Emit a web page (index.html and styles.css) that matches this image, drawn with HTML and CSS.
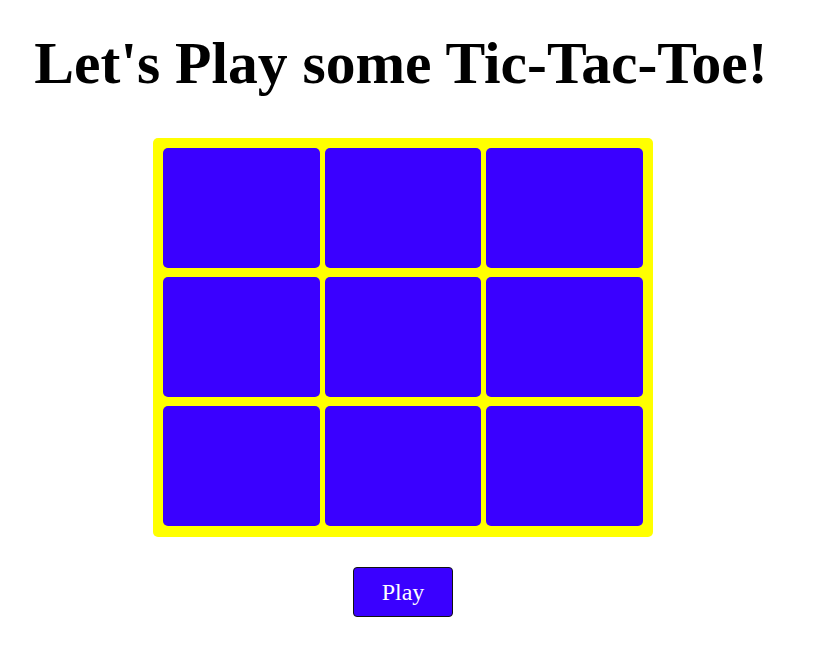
FILE: index.html
```html
<!DOCTYPE html>
<html lang="en">
<head>
<meta charset="utf-8">
<title>Tic-Tac-Toe</title>
<link rel="stylesheet" href="styles.css">
</head>
<body>
<main class="page">
  <h1 class="title">Let's Play some Tic-Tac-Toe!</h1>
  <div class="board">
    <div class="cell"></div>
    <div class="cell"></div>
    <div class="cell"></div>
    <div class="cell"></div>
    <div class="cell"></div>
    <div class="cell"></div>
    <div class="cell"></div>
    <div class="cell"></div>
    <div class="cell"></div>
  </div>
  <button class="play" type="button">Play</button>
</main>
</body>
</html>
```
FILE: styles.css
```css
html, body {
  margin: 0;
  padding: 0;
  background: #ffffff;
}
body {
  padding: 0 8px;
  font-family: "Liberation Serif", "Times New Roman", serif;
}
.page {
  width: 790px;
  display: flex;
  flex-direction: column;
  align-items: center;
  padding-top: 29px;
}
.title {
  margin: 0 4px 41px 0;
  font-size: 59.6px;
  line-height: 68px;
  font-weight: 700;
  color: #000;
  white-space: nowrap;
}
.board {
  box-sizing: border-box;
  width: 500px;
  padding: 10px 10px 11px;
  background: #ffff00;
  border-radius: 5px;
  display: grid;
  grid-template-columns: repeat(3, 1fr);
  grid-template-rows: repeat(3, 120px);
  column-gap: 5px;
  row-gap: 9px;
}
.cell {
  background: #3a00ff;
  border-radius: 5px;
}
.play {
  margin-top: 30px;
  box-sizing: border-box;
  width: 100px;
  height: 50px;
  background: #3a00ff;
  color: #ffffff;
  border: 1px solid #111;
  border-radius: 4px;
  font-family: "Liberation Serif", "Times New Roman", serif;
  font-size: 24px;
  padding: 0;
}
```
